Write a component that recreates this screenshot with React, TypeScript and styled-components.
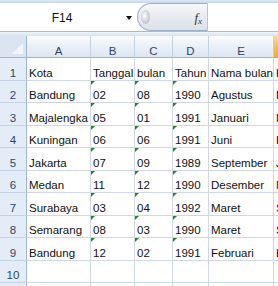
import React from 'react';
import styled, { createGlobalStyle, css } from 'styled-components';

const Global = createGlobalStyle`
  html, body { margin: 0; padding: 0; background: #fff; }
  body {
    width: 278px; height: 286px; overflow: hidden;
    font-family: "Liberation Sans", Arial, sans-serif;
  }
`;

const Window = styled.div`
  width: 278px; height: 286px; overflow: hidden;
  display: flex; flex-direction: column; background: #fff;
`;

const TopStrip = styled.div`
  flex: none; height: 3px;
  background: linear-gradient(#dfe9f5, #c4d6ec);
`;

const FormulaBar = styled.div`
  flex: none; height: 28px; display: flex; align-items: stretch;
  background: #fff; border-bottom: 1px solid #a9bbd2;
`;

const NameBox = styled.div`
  width: 124px; display: flex; align-items: center; justify-content: center;
  font-size: 12px; color: #111; padding-top: 1px;
`;

const ArrowBox = styled.div`
  width: 13px; display: flex; align-items: center; padding-left: 2px; box-sizing: border-box;
  &::after {
    content: ''; width: 0; height: 0; margin-top: 1px;
    border-left: 3px solid transparent; border-right: 3px solid transparent;
    border-top: 4px solid #111;
  }
`;

const Pill = styled.div`
  width: 71px; box-sizing: border-box; display: flex; align-items: center; justify-content: space-between;
  border: 1px solid #9cb0c7; border-right-color: #b5c4d6;
  border-radius: 14px 0 0 14px;
  background: linear-gradient(#f6f7f9, #e6e9ee 55%, #dde2e9);
  padding: 0 5px 0 3px;
`;

const Grip = styled.div`
  width: 9px; height: 14px; border-radius: 50%;
  background: radial-gradient(ellipse at 40% 40%, #ffffff 0%, #c9cfd8 55%, #aab3c0 100%);
`;

const Fx = styled.span`
  font-family: "Liberation Serif", "Times New Roman", serif;
  font-style: italic; font-size: 13px; color: #333; padding-top: 1px;
  sub { font-size: 9px; vertical-align: -2px; }
`;

const FormulaInput = styled.div`
  flex: 1; background: #fff;
`;

const Band = styled.div`
  flex: none; height: 4px;
  background: linear-gradient(#eef3f9, #d9e3f0);
`;

const Grid = styled.div`
  flex: 1; display: grid;
  grid-template-columns: 27px 64px 44px 38px 36px 65px 80px;
  grid-template-rows: 22px 23px 22px 23px 22px 23px 22px 23px 22px 23px 22px 23px;
  overflow: hidden;
`;

const Corner = styled.div`
  position: relative; box-sizing: border-box;
  background: #dbe5f2;
  border-right: 1px solid #9eb6ce; border-bottom: 1px solid #9eb6ce;
  &::after {
    content: ''; position: absolute; right: 3px; bottom: 3px; width: 0; height: 0;
    border-left: 11px solid transparent; border-bottom: 11px solid #f2f5f9;
  }
`;

const ColHeader = styled.div<{ $active?: boolean }>`
  box-sizing: border-box; display: flex; align-items: flex-end; justify-content: center;
  font-size: 11.5px; line-height: 12px; color: #2f4468;
  border-right: 1px solid #c3d1e2; border-bottom: 1px solid #9eb6ce;
  background: linear-gradient(#fbfcfe, #eaf0f8 50%, #dde6f2);
  ${(p) => p.$active && css`
    background: linear-gradient(#fbd999, #f6bd5c 50%, #f4ac3e);
    border-bottom-color: #e4a33f;
  `}
`;

const RowHeader = styled.div`
  box-sizing: border-box; display: flex; align-items: flex-end; justify-content: center;
  font-size: 11.5px; line-height: 14px; color: #2f4468;
  background: #e4ecf7;
  border-right: 1px solid #9eb6ce; border-bottom: 1px solid #c5d3e6;
`;

const Cell = styled.div<{ $text?: boolean }>`
  position: relative; box-sizing: border-box; display: flex; align-items: flex-end;
  padding: 0 2px; overflow: hidden; white-space: nowrap;
  font-size: 11.5px; line-height: 14px; color: #111;
  border-right: 1px solid #d0d7e5; border-bottom: 1px solid #d0d7e5;
  ${(p) => p.$text && css`
    &::before {
      content: ''; position: absolute; left: 0; top: 0; width: 0; height: 0;
      border-top: 4px solid #1d8a24; border-right: 4px solid transparent;
    }
  `}
`;

const cols = ['A', 'B', 'C', 'D', 'E', 'F'];

const data: string[][] = [
  ['Kota', 'Tanggal', 'bulan', 'Tahun', 'Nama bulan', 'Hasil'],
  ['Bandung', '02', '08', '1990', 'Agustus', 'Bandung, 02 Agustus 1990'],
  ['Majalengka', '05', '01', '1991', 'Januari', 'Majalengka, 05 Januari 1991'],
  ['Kuningan', '06', '06', '1991', 'Juni', 'Kuningan, 06 Juni 1991'],
  ['Jakarta', '07', '09', '1989', 'September', 'Jakarta, 07 September 1989'],
  ['Medan', '11', '12', '1990', 'Desember', 'Medan, 11 Desember 1990'],
  ['Surabaya', '03', '04', '1992', 'Maret', 'Surabaya, 03 Maret 1992'],
  ['Semarang', '08', '03', '1990', 'Maret', 'Semarang, 08 Maret 1990'],
  ['Bandung', '12', '02', '1991', 'Februari', 'Bandung, 12 Februari 1991'],
  ['', '', '', '', '', ''],
  ['', '', '', '', '', ''],
];

export default function App() {
  return (
    <Window>
      <Global />
      <TopStrip />
      <FormulaBar>
        <NameBox>F14</NameBox>
        <ArrowBox />
        <Pill>
          <Grip />
          <Fx><i>f</i><sub>x</sub></Fx>
        </Pill>
        <FormulaInput />
      </FormulaBar>
      <Band />
      <Grid>
        <Corner />
        {cols.map((c) => (
          <ColHeader key={c} $active={c === 'F'}>{c}</ColHeader>
        ))}
        {data.map((row, r) => (
          <React.Fragment key={r}>
            <RowHeader>{r + 1}</RowHeader>
            {row.map((v, c) => (
              <Cell key={c} $text={r >= 1 && r <= 8 && c >= 1 && c <= 3}>{v}</Cell>
            ))}
          </React.Fragment>
        ))}
      </Grid>
    </Window>
  );
}
